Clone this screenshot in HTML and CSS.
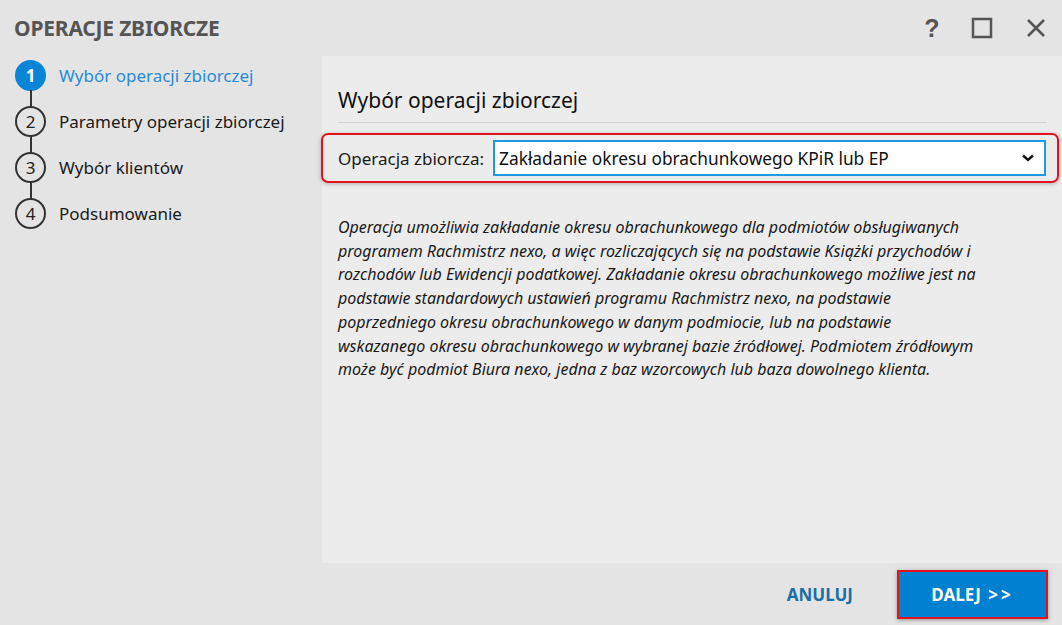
FILE: index.html
```html
<!DOCTYPE html>
<html lang="pl">
<head>
  <meta charset="UTF-8">
  <title>Operacje zbiorcze</title>
  <link rel="stylesheet" href="styles.css">
</head>
<body>

  <!-- Title bar -->
  <header class="titlebar">
    <div class="title">OPERACJE ZBIORCZE</div>
    <div class="win-buttons">
      <span class="win-btn help">?</span>
      <span class="win-btn">
        <svg width="22" height="22" viewBox="0 0 22 22"><rect x="2" y="2" width="18" height="18" fill="none" stroke="#555" stroke-width="2.5"/></svg>
      </span>
      <span class="win-btn">
        <svg width="22" height="22" viewBox="0 0 22 22"><path d="M3 3 L19 19 M19 3 L3 19" stroke="#555" stroke-width="2.5"/></svg>
      </span>
    </div>
  </header>

  <div class="main">
    <!-- Wizard steps -->
    <ul class="steps">
      <li class="step active"><span class="num">1</span><span class="label">Wybór operacji zbiorczej</span></li>
      <li class="step"><span class="num">2</span><span class="label">Parametry operacji zbiorczej</span></li>
      <li class="step"><span class="num">3</span><span class="label">Wybór klientów</span></li>
      <li class="step"><span class="num">4</span><span class="label">Podsumowanie</span></li>
    </ul>

    <!-- Content panel -->
    <section class="panel">
      <h2 class="panel-title">Wybór operacji zbiorczej</h2>

      <div class="field-box">
        <label class="field-label">Operacja zbiorcza:</label>
        <div class="select">
          <span>Zakładanie okresu obrachunkowego KPiR lub EP</span>
          <svg width="14" height="10" viewBox="0 0 14 10"><path d="M2 2.5 L7 7 L12 2.5" fill="none" stroke="#111" stroke-width="2.4"/></svg>
        </div>
      </div>

      <p class="description">
        Operacja umożliwia zakładanie okresu obrachunkowego dla podmiotów obsługiwanych<br>
        programem Rachmistrz nexo, a więc rozliczających się na podstawie Książki przychodów i<br>
        rozchodów lub Ewidencji podatkowej. Zakładanie okresu obrachunkowego możliwe jest na<br>
        podstawie standardowych ustawień programu Rachmistrz nexo, na podstawie<br>
        poprzedniego okresu obrachunkowego w danym podmiocie, lub na podstawie<br>
        wskazanego okresu obrachunkowego w wybranej bazie źródłowej. Podmiotem źródłowym<br>
        może być podmiot Biura nexo, jedna z baz wzorcowych lub baza dowolnego klienta.
      </p>
    </section>
  </div>

  <!-- Footer buttons -->
  <footer class="footer">
    <button class="btn-link">ANULUJ</button>
    <button class="btn-primary">DALEJ <span class="arrows">&gt;&gt;</span></button>
  </footer>

</body>
</html>
```

FILE: styles.css
```css
body {
  margin: 0;
  width: 1062px;
  height: 625px;
  background: #e4e4e4;
  font-family: 'Noto Sans', 'Open Sans', sans-serif;
  color: #1a1a1a;
  display: flex;
  flex-direction: column;
  overflow: hidden;
}

/* Title bar */
.titlebar {
  height: 56px;
  display: flex;
  align-items: center;
  justify-content: space-between;
  padding: 0 0 0 14px;
}

.titlebar .title {
  font-size: 21px;
  font-weight: bold;
  color: #555;
  letter-spacing: -0.2px;
}

.win-buttons {
  display: flex;
  align-items: center;
  margin-right: 15px;
  gap: 32px;
}

.win-btn {
  width: 22px;
  height: 22px;
  display: flex;
  align-items: center;
  justify-content: center;
}

.win-btn.help {
  font-size: 25px;
  font-weight: bold;
  color: #555;
  font-family: 'Liberation Sans', sans-serif;
  margin-right: -4px;
}

/* Main area */
.main {
  display: flex;
  flex: 1;
}

/* Steps */
.steps {
  list-style: none;
  margin: -4px 0 0 0;
  padding: 0 0 0 15px;
  width: 307px;
}

.step {
  display: flex;
  align-items: center;
  height: 46px;
  position: relative;
}

.step + .step::before {
  content: '';
  position: absolute;
  left: 15px;
  top: -8px;
  width: 2px;
  height: 18px;
  background: #333;
}

.step .num {
  width: 27px;
  height: 27px;
  border: 2px solid #333;
  border-radius: 50%;
  display: flex;
  align-items: center;
  justify-content: center;
  font-size: 17px;
  color: #222;
  flex-shrink: 0;
}

.step .label {
  margin-left: 13px;
  font-size: 17px;
  color: #1a1a1a;
}

.step.active .num {
  background: #0a84d6;
  border-color: #0a84d6;
  color: white;
  font-weight: bold;
}

.step.active .label {
  color: #2b8bd6;
}

/* Panel */
.panel {
  flex: 1;
  background: #ececec;
  padding: 30px 15px 0 16px;
}

.panel-title {
  margin: 0;
  font-size: 21px;
  font-weight: normal;
  color: #111;
  padding-bottom: 8px;
  border-bottom: 1px solid #d4d4d4;
}

.field-box {
  display: flex;
  align-items: center;
  margin: 10px -12px 0 -17px;
  padding: 5px 11px 5px 15px;
  border: 2px solid #e0141e;
  border-radius: 7px;
  box-shadow: 0 1px 4px rgba(0, 0, 0, 0.25);
}

.field-label {
  font-size: 17px;
  margin-right: 9px;
}

.select {
  flex: 1;
  height: 32px;
  background: white;
  border: 2px solid #1e9be0;
  display: flex;
  align-items: center;
  justify-content: space-between;
  padding: 0 9px 0 4px;
  font-size: 17.3px;
  color: #111;
}

.description {
  margin: 33px 0 0 0;
  font-style: italic;
  font-size: 16px;
  line-height: 23.7px;
  color: #1a1a1a;
}

/* Footer */
.footer {
  height: 62px;
  display: flex;
  align-items: center;
  justify-content: flex-end;
  padding-right: 14px;
  gap: 38px;
}

.btn-link {
  background: none;
  border: none;
  font-family: inherit;
  font-size: 17px;
  font-weight: bold;
  color: #1a6fa8;
  cursor: pointer;
}

.btn-primary {
  width: 151px;
  height: 49px;
  background: #0080d0;
  border: 2px solid #e0141e;
  color: white;
  font-family: inherit;
  font-size: 17px;
  font-weight: bold;
  box-shadow: 0 1px 4px rgba(0, 0, 0, 0.35);
  cursor: pointer;
}

.btn-primary .arrows {
  letter-spacing: 3px;
  margin-left: 3px;
}
```
